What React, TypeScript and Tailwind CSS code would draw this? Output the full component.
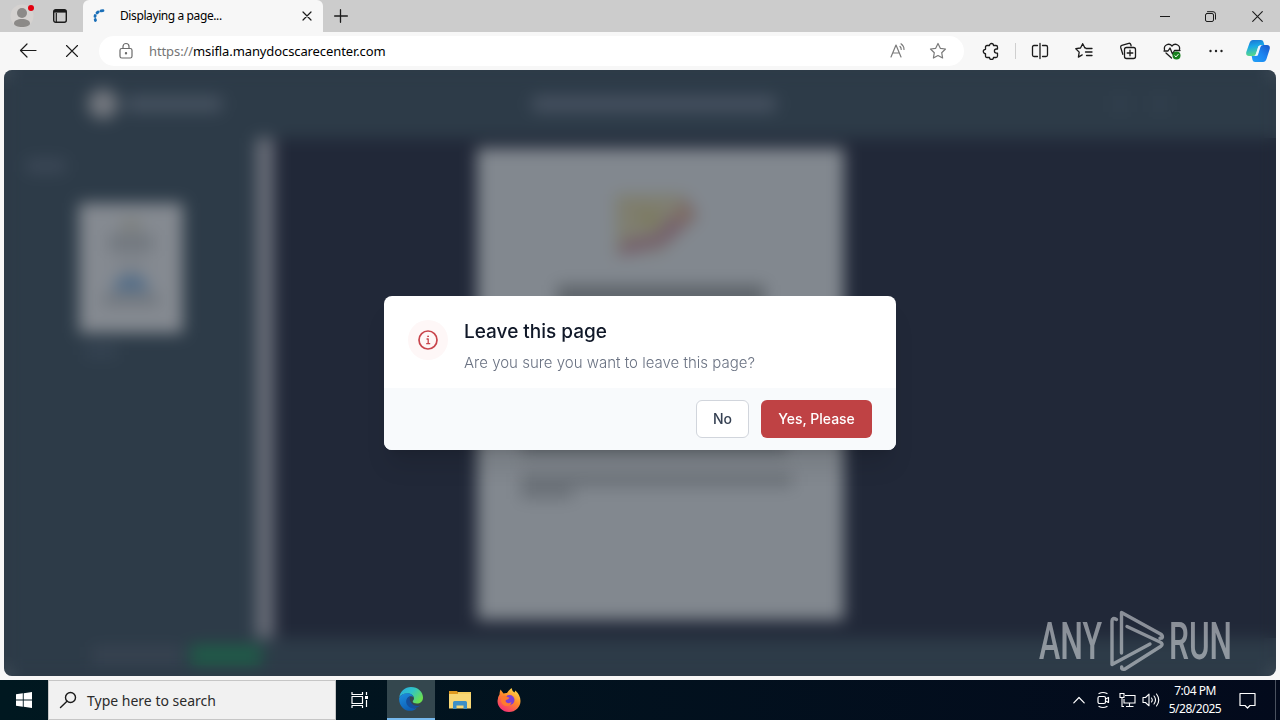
import { ReactNode } from "react";
import clsx from "clsx";

const Cell = ({ className, children }: { className?: string; children?: ReactNode }) => (
  <div className={clsx("flex shrink-0 items-center justify-center", className)}>
    {children}
  </div>
);

interface IconProps {
  w?: number;
  h?: number;
  stroke?: string;
  sw?: number;
  children: ReactNode;
}

const Icon = ({ w = 18, h = 18, stroke = "#1b1b1b", sw = 1.2, children }: IconProps) => (
  <svg
    width={w}
    height={h}
    viewBox={`0 0 ${w} ${h}`}
    fill="none"
    stroke={stroke}
    strokeWidth={sw}
    strokeLinecap="round"
    strokeLinejoin="round"
    className="block shrink-0"
  >
    {children}
  </svg>
);

const TabStrip = () => (
  <div className="flex h-8 shrink-0 bg-[#cccccc]">
    <Cell className="w-11">
      <Icon w={26} h={26} stroke="none">
        <circle cx="13" cy="13" r="11.5" fill="#d5d2d0" />
        <circle cx="13" cy="10" r="5" fill="#8c8a88" />
        <path d="M5 20.5c0-3 3.5-4.500 8-4.500s8 1.500 8 4.500c0 2-3.500 3.500-8 3.500s-8-1.500-8-3.500z" fill="#8c8a88" />
        <circle cx="22" cy="5" r="3" fill="#e3000f" />
      </Icon>
    </Cell>
    <Cell className="mr-[7px] w-8">
      <Icon w={16} h={16} sw={1.4}>
        <rect x="1.700" y="1.700" width="12.600" height="12.600" rx="2" />
        <path d="M2 3.300h12" strokeWidth="2.600" strokeLinecap="butt" />
        <path d="M4.300 5v9" strokeWidth="1.200" strokeLinecap="butt" />
      </Icon>
    </Cell>
    <div className="flex w-60 items-center rounded-t-md bg-[#f7f7f7] pr-2 pl-2.5">
      <Icon w={14} h={14} stroke="#1a6fb8" sw={2.8}>
        <path d="M2.500 11.500L2.200 10.500M2 7.500L2.200 6.500M4 3.900L5.200 2.900M8 1.900L10 1.700" />
      </Icon>
      <span className="ml-[13px] grow font-['Noto_Sans',sans-serif] text-[12px] leading-4 tracking-[-0.400px] whitespace-nowrap text-black">
        Displaying a page...
      </span>
      <Cell className="w-4">
        <Icon w={10} h={10}>
          <path d="M1 1l8 8M9 1l-8 8" />
        </Icon>
      </Cell>
    </div>
    <Cell className="w-9">
      <Icon w={14} h={14} sw={1.3}>
        <path d="M6.500 .7v12.600M.6 7h12.800" />
      </Icon>
    </Cell>
    <div className="grow" />
    <Cell className="w-[46px]">
      <Icon w={10} h={10} sw={1}>
        <path d="M0 5.500h10" />
      </Icon>
    </Cell>
    <Cell className="w-[46px] pr-px">
      <Icon w={11} h={11} sw={1}>
        <rect x=".5" y="2.500" width="8" height="8" rx="1.500" />
        <path d="M2.500 .7h5.500q2.500 0 2.500 2.500v5" />
      </Icon>
    </Cell>
    <Cell className="w-[46px]">
      <Icon w={11} h={11} sw={1.1}>
        <path d="M.7 .7l9.600 9.600M10.300 .7L.7 10.300" />
      </Icon>
    </Cell>
  </div>
);

const Toolbar = () => (
  <div className="flex h-[38px] shrink-0 items-center bg-[#f7f7f7] pl-1.5">
    <Cell className="w-11">
      <Icon w={18} h={16}>
        <path d="M17 7.500H1.500M8 1L1.500 7.500 8 14" />
      </Icon>
    </Cell>
    <Cell className="w-11">
      <Icon w={14} h={14} sw={1.1}>
        <path d="M1.500 1.500l11 11M12.500 1.500l-11 11" />
      </Icon>
    </Cell>
    <div className="ml-[5px] flex h-[30px] w-[865px] items-center rounded-full bg-white pr-1.5 pl-[18px]">
      <Icon w={18} h={18} stroke="#6b6b6b">
        <rect x="3" y="6.500" width="12" height="9.500" rx="1.800" />
        <path d="M6 6.500V4.500a3 3 0 0 1 6 0v2" />
        <circle cx="9" cy="11.200" r=".6" fill="#6b6b6b" />
      </Icon>
      <span className="ml-[14px] grow font-['Noto_Sans',sans-serif] text-[13px] leading-5 tracking-[-0.100px] whitespace-nowrap text-black">
        <span className="text-[#757575]">https://</span>msifla.manydocscarecenter.com
      </span>
      <Cell className="w-10">
        <Icon w={18} h={18} stroke="#7a7a7a">
          <path d="M2 15L7 3l5 12M3.800 11h6.400M11 4.500q1.300 1.200 1.200 3M12 1.800q3 2.200 3 5.700" />
        </Icon>
      </Cell>
      <Cell className="w-10">
        <Icon w={18} h={18} stroke="#7a7a7a">
          <path d="M9 1.500l2.300 4.800 5.200.7-3.800 3.700.9 5.300L9 13.500 4.400 16l.9-5.300L1.500 7l5.200-.7z" />
        </Icon>
      </Cell>
    </div>
    <Cell className="ml-[5px] w-11">
      <Icon sw={1.3}>
        <path d="M5 3.500h2.500a2 2 0 0 1 4 0H14q1.500 0 1.500 1.500v2h-1a2.100 2.100 0 0 0 0 4.200h1V14q0 1.500-1.500 1.500h-2.500a2 2 0 0 1-4 0H5Q3.500 15.500 3.500 14v-2.300a2.200 2.200 0 0 1 0-4.400V5Q3.500 3.500 5 3.500z" />
      </Icon>
    </Cell>
    <div className="mr-px ml-0.5 h-4 w-px bg-[#cfcfcf]" />
    <Cell className="w-[45px]">
      <Icon sw={1.3}>
        <path d="M6.500 3.500H3Q1.500 3.500 1.500 5v8q0 1.500 1.500 1.500h3.500M11.500 3.500H15q1.500 0 1.500 1.500v8q0 1.500-1.500 1.500h-3.500M9 1.500v15" />
      </Icon>
    </Cell>
    <Cell className="w-11">
      <Icon sw={1.3}>
        <path d="M10.500 5.800L9.900 6 7.700 1.700 5.500 6l-4.700.7 3.400 3.400-.8 5 3.800-2.200M11 6.500h6M10.500 10h6.500M11.500 13.500H17" />
      </Icon>
    </Cell>
    <Cell className="w-11">
      <Icon sw={1.3}>
        <path d="M3.800 12.300L1.700 5.500Q1.300 3.800 2.800 3.300l7-2Q11.300 1 11.800 2.500l.3 1.300" />
        <rect x="5.500" y="5.500" width="11" height="11" rx="2" />
        <path d="M11 8.200v5.600M8.200 11h5.600" />
      </Icon>
    </Cell>
    <Cell className="w-11">
      <Icon sw={1.3}>
        <path d="M1.500 7.500C.5 3 6 .5 9 4c3-3.500 8.500-1 7.500 3.500M1 9h4l2-3 2.500 6 2-3.500H17M3 11l5.500 5" />
        <circle cx="13.500" cy="13.500" r="4" fill="#16801c" stroke="none" />
        <path d="M11.800 13.700l1.200 1.200 2.200-2.500" stroke="#fff" strokeWidth="1" />
      </Icon>
    </Cell>
    <Cell className="w-11">
      <Icon w={14} h={4} stroke="none">
        <circle cx="1.500" cy="2" r="1.200" fill="#222" />
        <circle cx="7" cy="2" r="1.200" fill="#222" />
        <circle cx="12.500" cy="2" r="1.200" fill="#222" />
      </Icon>
    </Cell>
    <Cell className="w-10">
      <Icon w={24} h={24} stroke="none">
        <defs>
          <linearGradient id="cpA" x1="0" y1="0" x2="0.200" y2="1">
            <stop offset="0" stopColor="#1b6fd0" />
            <stop offset=".45" stopColor="#18a7e8" />
            <stop offset="1" stopColor="#57d88a" />
          </linearGradient>
          <linearGradient id="cpB" x1="1" y1="0" x2="0" y2="1">
            <stop offset="0" stopColor="#1a55c8" />
            <stop offset=".5" stopColor="#1c86f2" />
            <stop offset="1" stopColor="#22a2f6" />
          </linearGradient>
        </defs>
        <path d="M7 1h8q2 0 2.500 2l.8 3H15q-2 0-2.700 2l-2 6.500Q9.500 17 7 17H3q-3.500 0-2.700-4L3.500 4Q4.500 1 7 1z" fill="url(#cpA)" />
        <path d="M17 23H9q-2 0-2.500-2l-.8-4H9q2 0 2.700-2l2-6.500Q14.500 6 17 6h4q3.500 0 2.700 4l-3.200 10q-1 3-3.500 3z" fill="url(#cpB)" />
        <path d="M12.300 7.300l2.500-.5-3 9.800-2.600.4z" fill="#eef7ff" />
      </Icon>
    </Cell>
  </div>
);

const DocumentViewer = () => (
  <div className="flex h-full flex-col bg-[#2d3b48]">
    <div className="flex h-[68px] shrink-0 items-center">
      <div className="ml-[84px] size-[30px] rounded-full bg-[#74787f]" />
      <div className="ml-2 h-4 w-[96px] rounded bg-[#465260]" />
      <div className="ml-[310px] h-4 w-[244px] rounded bg-[#465160]" />
      <div className="ml-[338px] h-4 w-3 bg-[#33414f]" />
      <div className="ml-7 h-4 w-3 bg-[#33414f]" />
    </div>
    <div className="flex h-[500px] shrink-0">
      <div className="w-[252px] px-[22px] pt-[21px]">
        <div className="h-3.5 w-10 rounded bg-[#3c4857]" />
        <div className="mt-[30px] ml-[53px] flex h-[130px] w-[104px] flex-col items-center bg-[#858a91] pt-4">
          <div className="h-3 w-5 bg-[#7c7f7c]" />
          <div className="mt-1 h-4 w-11 bg-[#70767d]" />
          <div className="mt-2 h-2 w-7 bg-[#7a7f86]" />
          <div className="mt-2 h-4 w-9 rounded-t-full bg-[#4f6a86]" />
          <div className="mt-1 h-2.5 w-14 bg-[#6d737a]" />
        </div>
        <div className="mt-3 ml-[59px] h-3 w-8 bg-[#364453]" />
      </div>
      <div className="w-[18px] bg-[#6a6e79]" />
      <div className="grow bg-[#212838] pt-[10px] pl-[203px]">
        <div className="flex h-[472px] w-[367px] flex-col bg-[#82888f]">
          <svg width="90" height="72" viewBox="0 0 90 72" className="mt-[40px] ml-[134px] shrink-0">
            <path d="M4 6h70l14 22-38 36-46 4z" fill="#7e8177" />
            <path d="M6 8h60L48 40 10 52z" fill="#7f7e6f" />
            <path d="M74 10l12 18-34 30-44 10 2-14 36-8z" fill="#755f6c" />
            <path d="M70 14l12 10-10 12-12-8z" fill="#806f63" />
            <path d="M22 20l18 24 14-16z" fill="#7c7a5e" />
          </svg>
          <div className="mt-[25px] ml-[80px] h-6 w-[208px] shrink-0 bg-[#5e646a]" />
          <div className="mt-[122px] ml-[44px] h-[24px] w-[266px] shrink-0 bg-[#696f76]" />
          <div className="mt-[18px] ml-[44px] h-3.5 w-[272px] shrink-0 bg-[#6b7178]" />
          <div className="ml-[44px] h-3 w-[52px] shrink-0 bg-[#6b7178]" />
        </div>
      </div>
    </div>
    <div className="flex grow items-center pb-[5px] pl-[88px]">
      <div className="h-4 w-[90px] bg-[#384351]" />
      <div className="ml-2 h-5 w-[72px] rounded bg-[#1f5c48]" />
    </div>
  </div>
);

const LeaveModal = () => (
  <div className="absolute top-[226px] left-[380px] w-[512px] overflow-hidden rounded-lg bg-white font-['Inter','Liberation_Sans',sans-serif] shadow-xl">
    <div className="flex h-[92px] px-6 pt-6">
      <div className="flex size-10 items-center justify-center rounded-full bg-[#fef7f7]">
        <Icon w={22} h={22} stroke="#c8454c" sw={1.7}>
          <circle cx="11" cy="11" r="9" />
          <path d="M10 10h1.200v4.500M9.700 14.700h3" strokeWidth="1.300" />
          <circle cx="11" cy="7.300" r=".5" fill="#c8454c" strokeWidth=".8" />
        </Icon>
      </div>
      <div className="ml-4">
        <h3 className="text-[19px] leading-6 font-medium tracking-[0px] whitespace-nowrap text-gray-900">
          Leave this page
        </h3>
        <p className="mt-[9px] text-[15px] leading-5 font-light tracking-[0px] whitespace-nowrap text-gray-500">
          Are you sure you want to leave this page?
        </p>
      </div>
    </div>
    <div className="flex justify-end gap-3 bg-[#f8fafc] px-6 py-3 text-sm font-medium">
      <button className="h-[38px] w-[53px] rounded-md border border-gray-300 bg-white text-gray-700">
        No
      </button>
      <button className="h-[38px] w-[111px] rounded-md bg-[#bf4244] whitespace-nowrap text-white">
        Yes, Please
      </button>
    </div>
  </div>
);

const Watermark = () => (
  <svg
    width="236"
    height="66"
    viewBox="1036 607 236 66"
    className="absolute right-1 bottom-[3px] overflow-visible opacity-50"
    fill="none"
    stroke="#f4f6f8"
    strokeWidth="3.400"
    strokeLinejoin="round"
    strokeLinecap="round"
  >
    <g fill="#f4f6f8" stroke="none" fontFamily="Roboto, sans-serif" fontSize="52" fontWeight="500">
      <text x="1039" y="659" textLength="63" lengthAdjust="spacingAndGlyphs">ANY</text>
      <text x="1169" y="659" textLength="63" lengthAdjust="spacingAndGlyphs">RUN</text>
    </g>
    <path d="M1121.500 653V612.500l39 21.500q3 2 1.500 4l-2 .2" />
    <path d="M1127 626.500l33 15.500q4 2 .5 4.500L1125 669q-4 1-3.300-2" />
    <path d="M1116.500 619.500q-4.500-2.500-4.500 1.500v43.500l38-20.500" />
  </svg>
);

const Taskbar = () => (
  <div className="flex h-10 shrink-0 bg-linear-to-r from-[#001820] to-[#030a1c]">
    <Cell className="w-12">
      <Icon w={16} h={16} stroke="none">
        <path d="M0 2.300l6.800-1v6.300H0zM7.700 1.200L16 0v7.600H7.700zM0 8.400h6.800v6.300l-6.800-1zM7.700 8.400H16V16l-8.300-1.200z" fill="#fff" />
      </Icon>
    </Cell>
    <div className="flex w-72 items-center border border-[#c6c6c6] bg-[#f1f1f1] pl-2.5">
      <Icon w={18} h={18} sw={1.4}>
        <circle cx="11.500" cy="6.500" r="5" />
        <path d="M8 10.200L1.500 16.500" />
      </Icon>
      <span className="mt-px ml-2.5 font-['Noto_Sans',sans-serif] text-[14px] leading-5 tracking-[0px] whitespace-nowrap text-[#2b2b2b]">
        Type here to search
      </span>
    </div>
    <Cell className="w-[51px] pr-[3px]">
      <Icon w={18} h={18} stroke="#fff" sw={1.2}>
        <path d="M1 1v2.500h10.500V1M1 17v-2.500h10.500V17M1 5.500h10.500v7H1zM15.500 1v3M15.500 9v7" strokeLinecap="butt" />
        <path d="M14 5h3v3h-3z" fill="#fff" stroke="none" />
      </Icon>
    </Cell>
    <Cell className="w-12 border-b-2 border-[#76b9ed] bg-[#34474e]">
      <Icon w={24} h={24} stroke="none">
        <defs>
          <linearGradient id="edA" x1="0" y1="0" x2="1" y2=".6">
            <stop offset="0" stopColor="#2aa9e0" />
            <stop offset=".5" stopColor="#2fc3c9" />
            <stop offset="1" stopColor="#6be04f" />
          </linearGradient>
          <linearGradient id="edB" x1="0" y1="0" x2=".5" y2="1">
            <stop offset="0" stopColor="#1d8fe0" />
            <stop offset="1" stopColor="#0e5fb5" />
          </linearGradient>
        </defs>
        <path d="M.3 10.500C1 4.500 6 0 12 0c7 0 12 5 12 10.500 0 4-3 6-6 6-2.500 0-4.300-.8-4.300-2 0-.8 1.300-1.200 1.300-3C15 8.500 12 6.500 8.500 6.500 4 6.500 1.200 8.500.3 10.500z" fill="url(#edA)" />
        <path d="M.1 11.500C1 8.500 4.500 6.300 8.500 6.300c3 0 5.500 1.700 6 3.700-1-.7-2-.9-3-.7-3 .5-4.300 4-3 7.300 1.200 3.300 5 5.500 9 4.700C12 27 0 23 .1 11.500z" fill="url(#edB)" />
        <path d="M11.300 9.300c-3.500.7-5 4.500-3.500 8 1.700 4 7.500 6 14.200 1-2.500 1-6 1-8.500-1-2.500-2-3.500-5-2.200-8z" fill="#154f9c" />
      </Icon>
    </Cell>
    <Cell className="w-[50px]">
      <Icon w={22} h={20} stroke="none">
        <path d="M0 1h8l1.500 2H22v15H0z" fill="#e09a20" />
        <path d="M9 2h13v3H9z" fill="#f5cf62" />
        <path d="M0 4h22v14.500H0z" fill="#f8d775" />
        <path d="M4 19v-6.500Q4 11 5.500 11h11q1.500 0 1.500 1.500V19h-3.500v-3.500h-7V19z" fill="#3d8fc6" />
      </Icon>
    </Cell>
    <Cell className="w-12">
      <Icon w={24} h={24} stroke="none">
        <defs>
          <linearGradient id="ffA" x1=".8" y1="0" x2=".2" y2="1">
            <stop offset="0" stopColor="#ffe14a" />
            <stop offset=".45" stopColor="#ff8a2a" />
            <stop offset="1" stopColor="#f5277c" />
          </linearGradient>
        </defs>
        <path d="M3.500 1.500l3 4q2-.7 3.500-.5Q12 2 14.500 0q.5 3 3 4.500l.8-2Q23.500 7 23.500 13c0 6-5 11-11.500 11S.5 19 .5 13q0-4 2-6.500 0-2.500 1-5z" fill="url(#ffA)" />
        <circle cx="12.500" cy="12" r="5" fill="#7b3fd6" />
        <path d="M4.500 9q3-2.500 6 0l2 .8q-1 2-3.500 2.200-1 1.500.5 2.500 2.500 1.500 5-.5-1 4-4.500 4-5 0-6-5z" fill="#ff7a2e" />
      </Icon>
    </Cell>
    <div className="grow" />
    <Cell className="w-[25px]">
      <Icon w={12} h={8} stroke="#fff">
        <path d="M.8 6.800L6 1.500l5.200 5.300" />
      </Icon>
    </Cell>
    <Cell className="w-6">
      <Icon w={14} h={18} stroke="#fff" sw={1.2}>
        <rect x="2" y="5.500" width="7.500" height="7" rx="1.500" />
        <path d="M9.500 8l3-1.500v5l-3-1.500M3 2.500q4-2 8 0M3 15.500q4 2 8 0" />
      </Icon>
    </Cell>
    <Cell className="w-6">
      <Icon w={17} h={16} stroke="#fff" sw={1.1}>
        <path d="M6 3.500h10v7.500H5V7M10.500 11v3M7 14.500h7.500M1 1.500h4v4H1zM3 5.500v9h2" strokeLinecap="butt" strokeLinejoin="miter" />
      </Icon>
    </Cell>
    <Cell className="w-6">
      <Icon w={18} h={16} stroke="#fff" sw={1.1}>
        <path d="M1 5.500h2.500L7 2.200v11.600L3.500 10.500H1zM9.500 6q1.500 2 0 4M12 4q3 4 0 8M14.500 2q4.500 6 0 12" />
      </Icon>
    </Cell>
    <div className="flex w-16 flex-col items-center justify-center font-['Noto_Sans',sans-serif] text-[12px] leading-[18px] tracking-[-0.500px] whitespace-nowrap text-white">
      <span>7:04 PM</span>
      <span>5/28/2025</span>
    </div>
    <Cell className="mr-2 w-10">
      <Icon w={17} h={17} stroke="#fff">
        <path d="M1 1.500h15v12h-5L8.500 16 6 13.500H1z" />
      </Icon>
    </Cell>
    <div className="mr-1 w-px bg-[#4a515f]" />
  </div>
);

export default function App() {
  return (
    <div className="flex h-[720px] w-[1280px] flex-col overflow-hidden bg-[#f7f7f7]">
      <TabStrip />
      <Toolbar />
      <div className="relative mx-1 mb-1 h-[606px] shrink-0 overflow-hidden rounded-lg">
        <DocumentViewer />
        <div className="absolute inset-0 backdrop-blur-sm" />
        <LeaveModal />
        <Watermark />
      </div>
      <Taskbar />
    </div>
  );
}
